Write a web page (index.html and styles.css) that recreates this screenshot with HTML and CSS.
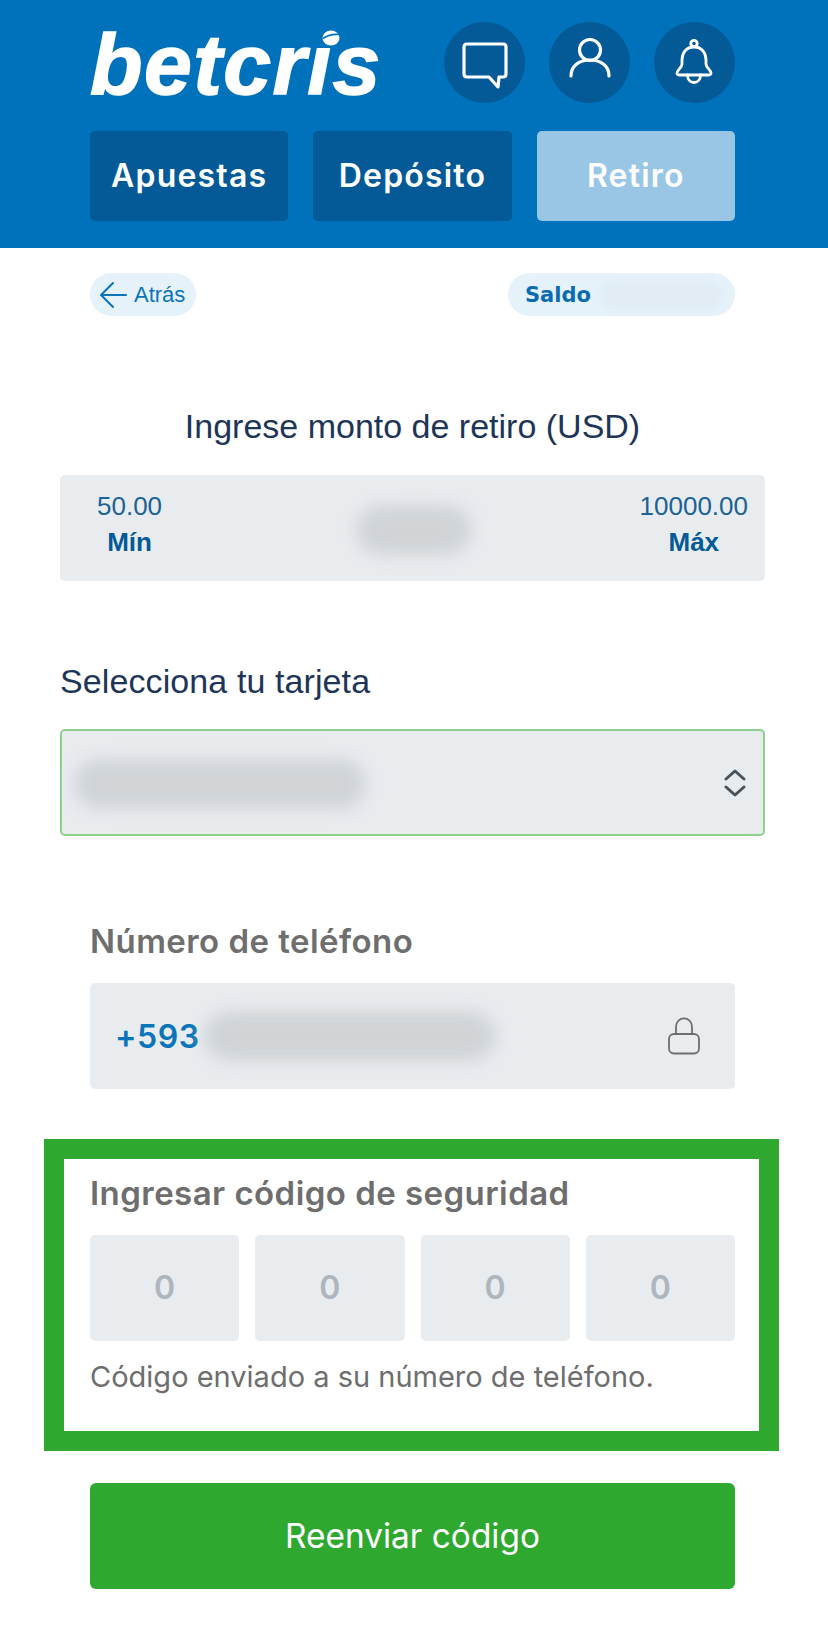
FILE: index.html
```html
<!DOCTYPE html>
<html lang="es">
<head>
    <meta charset="UTF-8">
    <title>Betcris - Retiro</title>
    <link rel="stylesheet" href="styles.css">
</head>
<body>
    <div class="header">
        <div class="header-top">
            <div class="logo">
                <span class="logo-text">betcrıs</span>
                <svg class="logo-ball" width="18" height="16" viewBox="0 0 18 16">
                    <ellipse cx="9" cy="8" rx="8.5" ry="7.5" fill="#fff"/>
                    <path d="M1 8.5 C6 5 12 4 17 4.5" stroke="#0072bc" stroke-width="1.6" fill="none"/>
                </svg>
            </div>
            <div class="icons">
                <div class="icon-btn">
                    <svg width="80" height="80" viewBox="0 0 80 80" fill="none" stroke="#fff" stroke-width="3.2" stroke-linecap="round" stroke-linejoin="round">
                        <path d="M23 22 H59 Q62 22 62 25 V52 Q62 55 59 55 H55 L54 65 L45 55 H23 Q20 55 20 52 V25 Q20 22 23 22 Z"/>
                    </svg>
                </div>
                <div class="icon-btn">
                    <svg width="80" height="80" viewBox="0 0 80 80" fill="none" stroke="#fff" stroke-width="3.2" stroke-linecap="round" stroke-linejoin="round">
                        <circle cx="41" cy="28" r="10.5"/>
                        <path d="M22 54 C22 44 30 38 41 38 S60 44 60 54"/>
                    </svg>
                </div>
                <div class="icon-btn">
                    <svg width="80" height="80" viewBox="0 0 80 80" fill="none" stroke="#fff" stroke-width="2.8" stroke-linecap="round" stroke-linejoin="round">
                        <circle cx="40" cy="21.5" r="3.2"/>
                        <path d="M40 25 C32 25 28 31 28 38 V42 C28 46 23 48 23 51 C23 53 24 53 26 53 H54 C56 53 57 53 57 51 C57 48 52 46 52 42 V38 C52 31 48 25 40 25 Z"/>
                        <path d="M33.5 53 C33.5 63 46.5 63 46.5 53"/>
                    </svg>
                </div>
            </div>
        </div>
        <div class="tabs">
            <a class="tab">Apuestas</a>
            <a class="tab">Depósito</a>
            <a class="tab active">Retiro</a>
        </div>
    </div>

    <div class="topbar">
        <a class="back">
            <svg width="28" height="28" viewBox="0 0 28 28" fill="none" stroke="#0a74b9" stroke-width="2" stroke-linecap="round" stroke-linejoin="round">
                <path d="M27 14 H2 M14 2 L2 14 L14 26"/>
            </svg>
            <span>Atrás</span>
        </a>
        <div class="saldo">
            <b>Saldo</b>
            <span class="saldo-blur"></span>
        </div>
    </div>

    <div class="amount">
        <h2 class="amount-title">Ingrese monto de retiro (USD)</h2>
        <div class="amount-box">
            <div class="limit">
                <span class="limit-value">50.00</span>
                <b>Mín</b>
            </div>
            <span class="blur blur-amount"></span>
            <div class="limit">
                <span class="limit-value">10000.00</span>
                <b>Máx</b>
            </div>
        </div>
    </div>

    <div class="card-select">
        <label class="card-label">Selecciona tu tarjeta</label>
        <div class="select">
            <span class="blur blur-card"></span>
            <svg width="24" height="28" viewBox="0 0 24 28" fill="none" stroke="#46525c" stroke-width="3" stroke-linecap="round" stroke-linejoin="round">
                <path d="M3 10 L12 2 L21 10 M3 18 L12 26 L21 18"/>
            </svg>
        </div>
    </div>

    <div class="phone">
        <label class="field-label">Número de teléfono</label>
        <div class="phone-box">
            <span class="prefix">+593</span>
            <span class="blur blur-phone"></span>
            <svg class="lock" width="34" height="38" viewBox="0 0 34 38" fill="none" stroke="#6c6f72" stroke-width="1.8" stroke-linecap="round" stroke-linejoin="round">
                <rect x="2" y="17" width="30" height="19.5" rx="5"/>
                <path d="M9 17 V10 C9 -1.5 25 -1.5 25 10 V17"/>
            </svg>
        </div>
    </div>

    <div class="code">
        <label class="field-label">Ingresar código de seguridad</label>
        <div class="code-cells">
            <div class="cell">0</div>
            <div class="cell">0</div>
            <div class="cell">0</div>
            <div class="cell">0</div>
        </div>
        <p class="code-note">Código enviado a su número de teléfono.</p>
    </div>

    <div class="resend-wrap">
        <button class="resend">Reenviar código</button>
    </div>
</body>
</html>
```

FILE: styles.css
```css
body {
    margin: 0;
    background: #fff;
    font-family: 'Liberation Sans', Arial, sans-serif;
}
a {
    text-decoration: none;
}
.header {
    background: #0072bc;
    height: 248px;
    box-sizing: border-box;
    padding: 22px 93px 0 90px;
}
.header-top {
    display: flex;
    justify-content: space-between;
    height: 81px;
}
.logo {
    position: relative;
    height: 81px;
    line-height: 84px;
}
.logo-text {
    font-family: 'Liberation Sans', Arial, sans-serif;
    font-weight: 700;
    font-style: italic;
    font-size: 86px;
    letter-spacing: 1.4px;
    -webkit-text-stroke: 1.5px #fff;
    color: #fff;
}
.logo-ball {
    position: absolute;
    left: 232px;
    top: 8px;
}
.icons {
    display: flex;
    gap: 24px;
}
.icon-btn {
    width: 81px;
    height: 81px;
    border-radius: 50%;
    background: #035a96;
}
.tabs {
    display: flex;
    gap: 25px;
    margin-top: 28px;
}
.tab {
    flex: 1;
    height: 90px;
    line-height: 90px;
    text-align: center;
    background: #035a96;
    border-radius: 5px;
    color: #fff;
    font-family: 'Inter', sans-serif;
    font-weight: 600;
    font-size: 32px;
    letter-spacing: 1.2px;
}
.tab.active {
    background: #9ac6e6;
}
.topbar {
    display: flex;
    justify-content: space-between;
    align-items: center;
    padding: 25px 93px 0 90px;
}
.back {
    display: flex;
    align-items: center;
    gap: 7px;
    height: 43px;
    padding: 0 11px 0 9px;
    background: #e6f2fa;
    border-radius: 22px;
    color: #0a74b9;
    font-size: 22px;
}
.saldo {
    display: flex;
    align-items: center;
    gap: 10px;
    width: 227px;
    height: 43px;
    box-sizing: border-box;
    padding: 0 12px 0 17px;
    background: #e6f2fa;
    border-radius: 22px;
}
.saldo b {
    font-family: 'DejaVu Sans', sans-serif;
    font-size: 21px;
    color: #0a6cb0;
}
.saldo-blur {
    flex: 1;
    height: 30px;
    background: #e1ecf5;
    border-radius: 15px;
    filter: blur(3px);
}
.amount {
    padding: 0 63px 0 60px;
    margin-top: 86px;
}
.amount-title {
    margin: 0;
    text-align: center;
    font-weight: 400;
    font-size: 34px;
    line-height: 48px;
    color: #1d3557;
}
.amount-box {
    display: flex;
    justify-content: space-between;
    align-items: center;
    box-sizing: border-box;
    height: 106px;
    margin-top: 25px;
    padding: 0 17px 8px 37px;
    background: #e9ecef;
    border-radius: 5px;
}
.limit {
    display: flex;
    flex-direction: column;
    align-items: center;
    gap: 8px;
    color: #035a96;
}
.limit-value {
    font-size: 26px;
    line-height: 28px;
    color: #1b6296;
}
.limit b {
    font-size: 26px;
    line-height: 28px;
}
.blur {
    display: block;
    background: #d0d4d7;
    border-radius: 26px;
    filter: blur(8px);
}
.blur-amount {
    width: 116px;
    height: 50px;
    margin: 12px 0 0 27px;
}
.card-select {
    padding: 0 63px 0 60px;
    margin-top: 76px;
}
.card-label {
    display: block;
    font-size: 34px;
    letter-spacing: 0.1px;
    line-height: 48px;
    color: #1d3557;
}
.select {
    display: flex;
    justify-content: space-between;
    align-items: center;
    box-sizing: border-box;
    height: 107px;
    margin-top: 24px;
    padding: 0 16px 0 12px;
    background: #e9ecef;
    border: 2px solid #8fd08f;
    border-radius: 5px;
}
.blur-card {
    width: 292px;
    height: 50px;
    margin-top: 2px;
}
.phone {
    padding: 0 93px 0 90px;
    margin-top: 81px;
}
.field-label {
    display: block;
    font-family: 'Inter', sans-serif;
    font-weight: 600;
    font-size: 33px;
    letter-spacing: 0.45px;
    line-height: 48px;
    color: #6e6e6e;
}
.phone-box {
    display: flex;
    align-items: center;
    height: 106px;
    margin-top: 18px;
    padding: 0 34px 0 25px;
    background: #e9ecef;
    border-radius: 5px;
}
.prefix {
    font-family: 'Inter', sans-serif;
    font-weight: 600;
    font-size: 32px;
    letter-spacing: 0.5px;
    color: #0a74b9;
}
.blur-phone {
    width: 292px;
    height: 50px;
    margin-left: 5px;
}
.lock {
    margin-left: auto;
}
.code {
    box-sizing: border-box;
    height: 312px;
    margin: 50px 49px 0 44px;
    padding: 10px 24px 0 26px;
    border: 20px solid #2ea82e;
}
.code-cells {
    display: flex;
    gap: 16px;
    margin-top: 18px;
}
.cell {
    flex: 1;
    height: 106px;
    line-height: 106px;
    text-align: center;
    background: #e9ecef;
    border-radius: 5px;
    font-family: 'Inter', sans-serif;
    font-weight: 600;
    font-size: 32px;
    color: #adb5bd;
}
.code-note {
    margin: 16px 0 0;
    font-family: 'Inter', sans-serif;
    font-size: 29px;
    line-height: 40px;
    color: #6e6e6e;
}
.resend-wrap {
    padding: 32px 93px 0 90px;
}
.resend {
    display: block;
    width: 100%;
    height: 106px;
    background: #2ea82e;
    border: none;
    border-radius: 6px;
    color: #fff;
    font-family: 'Inter', sans-serif;
    font-size: 33.4px;
}
```
